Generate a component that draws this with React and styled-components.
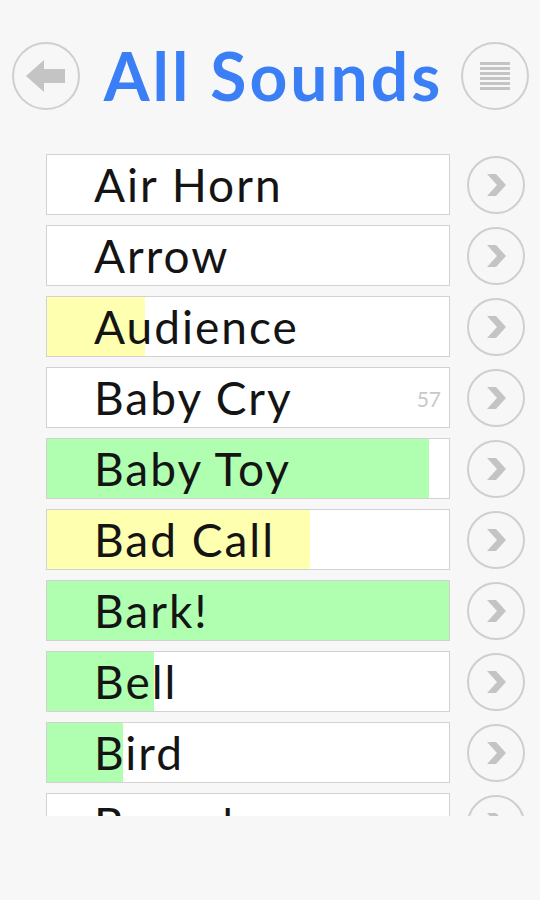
import styled, { createGlobalStyle } from "styled-components";

const GlobalStyle = createGlobalStyle`
  html, body {
    margin: 0;
    padding: 0;
    background: #f7f7f7;
  }
  body {
    font-family: Lato, "Liberation Sans", sans-serif;
  }
`;

const Page = styled.div`
  width: 540px;
  height: 900px;
  background: #f7f7f7;
  display: flex;
  flex-direction: column;
  overflow: hidden;
`;

const Header = styled.div`
  display: flex;
  align-items: center;
  justify-content: space-between;
  padding: 42px 11px 0 12px;
  height: 68px;
`;

const RoundButton = styled.div`
  width: ${(p) => p.size}px;
  height: ${(p) => p.size}px;
  box-sizing: border-box;
  border: 2px solid #cfcfcf;
  border-radius: 50%;
  display: flex;
  align-items: center;
  justify-content: center;
  flex-shrink: 0;
`;

const Title = styled.h1`
  margin: 0 0 0 6px;
  font-family: Lato, "Liberation Sans", sans-serif;
  font-weight: 700;
  font-size: 66px;
  color: #3b7ff6;
  letter-spacing: 3px;
  line-height: 1;
`;

const ListViewport = styled.div`
  margin-top: 44px;
  height: 662px;
  overflow: hidden;
  padding-left: 46px;
`;

const List = styled.ul`
  list-style: none;
  margin: 0;
  padding: 0;
  display: flex;
  flex-direction: column;
  gap: 10px;
`;

const Row = styled.li`
  display: flex;
  align-items: center;
  gap: 17px;
`;

const Bar = styled.div`
  position: relative;
  width: 404px;
  height: 61px;
  box-sizing: border-box;
  border: 1px solid #d2d2d2;
  background: #fff;
  overflow: hidden;
`;

const Fill = styled.div`
  position: absolute;
  left: 0;
  top: 0;
  bottom: 0;
  background: ${(p) => (p.tone === "yellow" ? "#ffffb0" : "#b0ffb0")};
`;

const Label = styled.span`
  position: relative;
  display: block;
  padding-left: 47px;
  font-size: 46px;
  font-weight: 400;
  letter-spacing: 2px;
  line-height: 60px;
  color: #141414;
  white-space: nowrap;
`;

const Count = styled.span`
  position: absolute;
  right: 8px;
  top: 50%;
  transform: translateY(-50%);
  font-size: 21px;
  color: #c8c8c8;
`;

const sounds = [
  { name: "Air Horn" },
  { name: "Arrow" },
  { name: "Audience", fill: 98, tone: "yellow" },
  { name: "Baby Cry", count: 57 },
  { name: "Baby Toy", fill: 382, tone: "green" },
  { name: "Bad Call", fill: 263, tone: "yellow" },
  { name: "Bark!", fill: 404, tone: "green" },
  { name: "Bell", fill: 107, tone: "green" },
  { name: "Bird", fill: 76, tone: "green" },
  { name: "Boom!" },
];

const BackIcon = () => (
  <svg width="44" height="36" viewBox="0 0 44 36">
    <path d="M2 18 L20 2 L20 11 L41 11 L41 25 L20 25 L20 34 Z" fill="#c4c4c4" />
  </svg>
);

const MenuIcon = () => (
  <svg width="32" height="32" viewBox="0 0 32 32">
    {[2, 7, 12, 17, 22, 27].map((y) => (
      <rect key={y} x="1" y={y} width="30" height="3" fill="#c4c4c4" />
    ))}
  </svg>
);

const ChevronIcon = () => (
  <svg width="24" height="26" viewBox="0 0 24 26">
    <path d="M3 2 L12 2 L22 13 L12 24 L3 24 L13 13 Z" fill="#c4c4c4" />
  </svg>
);

export default function App() {
  return (
    <Page>
      <GlobalStyle />
      <Header>
        <RoundButton size={68}>
          <BackIcon />
        </RoundButton>
        <Title>All Sounds</Title>
        <RoundButton size={68}>
          <MenuIcon />
        </RoundButton>
      </Header>
      <ListViewport>
        <List>
          {sounds.map((s) => (
            <Row key={s.name}>
              <Bar>
                {s.fill ? <Fill tone={s.tone} style={{ width: s.fill }} /> : null}
                <Label>{s.name}</Label>
                {s.count ? <Count>{s.count}</Count> : null}
              </Bar>
              <RoundButton size={58}>
                <ChevronIcon />
              </RoundButton>
            </Row>
          ))}
        </List>
      </ListViewport>
    </Page>
  );
}
